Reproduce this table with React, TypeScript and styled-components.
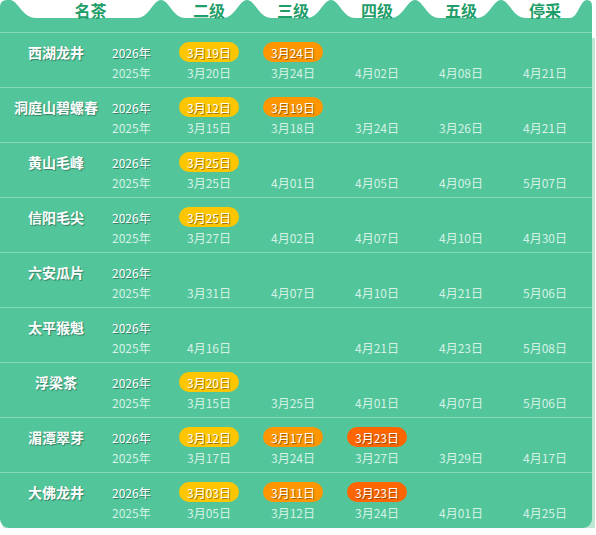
import React from "react";
import styled, { createGlobalStyle } from "styled-components";

const Global = createGlobalStyle`
  html, body { margin: 0; padding: 0; background: #ffffff; }
  body { font-family: "Noto Sans CJK SC", "Liberation Sans", sans-serif; }
`;

const GREEN = "#52c59a";

const Panel = styled.div`
  width: 592px;
`;

const Body = styled.div`
  background: ${GREEN};
  border-radius: 0 0 9px 9px;
  box-shadow: 3px 6px 0 #bfe5d5;
  padding-bottom: 1px;
`;

const Header = styled.div`
  display: grid;
  height: 32px;
  & > * { grid-area: 1 / 1; }
`;

const HeaderLabels = styled.div`
  display: grid;
  grid-template-columns: 167px repeat(5, 84px);
  height: 20px;
  align-items: center;
  align-self: start;
`;

const HeaderLabel = styled.div<{ $pad?: number }>`
  text-align: center;
  padding-left: ${(p) => p.$pad ?? 0}px;
  font-size: 16px;
  font-weight: 700;
  line-height: 20px;
  color: #1f9e69;
`;

const Row = styled.div`
  display: grid;
  grid-template-columns: 112px 55px repeat(5, 84px);
  grid-template-rows: 20px 20px;
  border-top: 1px solid #86d6b8;
  padding: 9px 0 5px;
  align-items: center;
`;

const Name = styled.div`
  grid-row: 1;
  text-align: center;
  color: #fff;
  font-size: 14px;
  font-weight: 700;
  text-shadow: 1px 1px 1px rgba(0, 0, 0, 0.35);
`;

const Year = styled.div<{ $current?: boolean }>`
  font-size: 12px;
  color: ${(p) => (p.$current ? "#ffffff" : "#d6f2e6")};
  text-shadow: ${(p) => (p.$current ? "1px 1px 0 rgba(0,0,0,0.35)" : "none")};
`;

const Cell = styled.div`
  display: flex;
  justify-content: center;
  font-size: 12px;
  color: #d6f2e6;
`;

const PILL_COLORS = ["#ffc600", "#ff9600", "#ff6500"];

const Pill = styled.span<{ $level: number }>`
  display: inline-flex;
  align-items: center;
  justify-content: center;
  width: 60px;
  height: 20px;
  border-radius: 10px;
  background: ${(p) => PILL_COLORS[p.$level]};
  color: #fff;
  font-size: 12px;
  text-shadow: 1px 1px 0 rgba(90, 50, 0, 0.55);
`;

type Tea = { name: string; now: string[]; last: string[] };

const teas: Tea[] = [
  { name: "西湖龙井", now: ["3月19日", "3月24日"], last: ["3月20日", "3月24日", "4月02日", "4月08日", "4月21日"] },
  { name: "洞庭山碧螺春", now: ["3月12日", "3月19日"], last: ["3月15日", "3月18日", "3月24日", "3月26日", "4月21日"] },
  { name: "黄山毛峰", now: ["3月25日"], last: ["3月25日", "4月01日", "4月05日", "4月09日", "5月07日"] },
  { name: "信阳毛尖", now: ["3月25日"], last: ["3月27日", "4月02日", "4月07日", "4月10日", "4月30日"] },
  { name: "六安瓜片", now: [], last: ["3月31日", "4月07日", "4月10日", "4月21日", "5月06日"] },
  { name: "太平猴魁", now: [], last: ["4月16日", "", "4月21日", "4月23日", "5月08日"] },
  { name: "浮梁茶", now: ["3月20日"], last: ["3月15日", "3月25日", "4月01日", "4月07日", "5月06日"] },
  { name: "湄潭翠芽", now: ["3月12日", "3月17日", "3月23日"], last: ["3月17日", "3月24日", "3月27日", "3月29日", "4月17日"] },
  { name: "大佛龙井", now: ["3月03日", "3月11日", "3月23日"], last: ["3月05日", "3月12日", "3月24日", "4月01日", "4月25日"] },
];

const peaks = [161, 247, 331, 415, 501];

function bell(c: number) {
  return `H${c - 24} C${c - 12},18 ${c - 8},0 ${c},0 C${c + 8},0 ${c + 12},18 ${c + 24},18 `;
}

const wavePath =
  `M0,32 V7 Q0,0 7,0 H10 C18,0 22,18 36,18 ` +
  peaks.map(bell).join("") +
  `H570 C578,18 580,0 587,0 Q592,0 592,6 V32 Z`;

function HeaderWave() {
  return (
    <svg width="592" height="32" viewBox="0 0 592 32" style={{ display: "block" }}>
      <path d={wavePath} fill={GREEN} />
    </svg>
  );
}

export default function App() {
  return (
    <>
      <Global />
      <Panel>
        <Header>
          <HeaderWave />
          <HeaderLabels>
            <HeaderLabel $pad={14}>名茶</HeaderLabel>
            <HeaderLabel>二级</HeaderLabel>
            <HeaderLabel>三级</HeaderLabel>
            <HeaderLabel>四级</HeaderLabel>
            <HeaderLabel>五级</HeaderLabel>
            <HeaderLabel>停采</HeaderLabel>
          </HeaderLabels>
        </Header>
        <Body>
          {teas.map((t) => (
            <Row key={t.name}>
              <Name>{t.name}</Name>
              <Year $current>2026年</Year>
              {[0, 1, 2, 3, 4].map((i) => (
                <Cell key={"n" + i}>
                  {t.now[i] ? <Pill $level={i}>{t.now[i]}</Pill> : null}
                </Cell>
              ))}
              <div />
              <Year>2025年</Year>
              {t.last.map((d, i) => (
                <Cell key={"l" + i}>{d}</Cell>
              ))}
            </Row>
          ))}
        </Body>
      </Panel>
    </>
  );
}
